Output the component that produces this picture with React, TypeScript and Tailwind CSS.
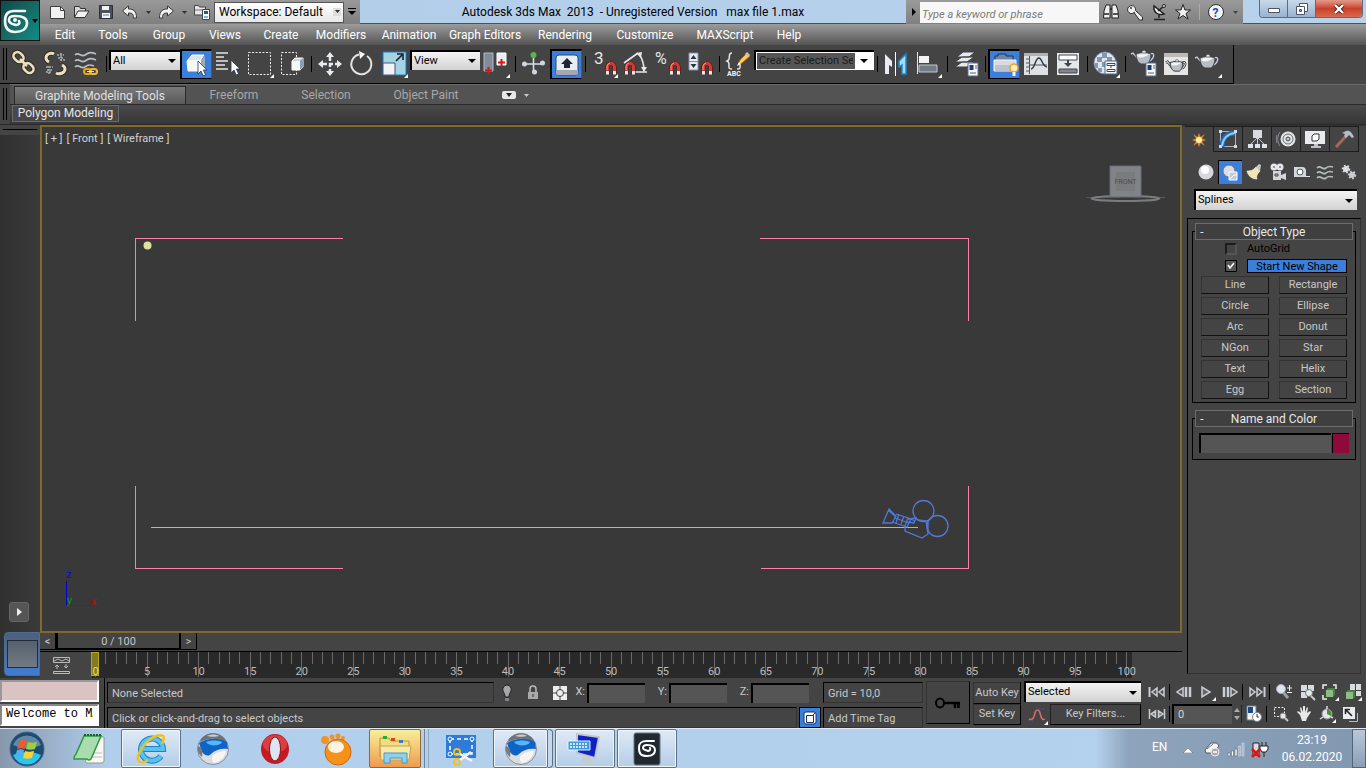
import type { ReactNode } from "react";

type IconProps = { children: ReactNode; w?: number; h?: number };

function Icon({ children, w = 28, h = 28 }: IconProps) {
  return (
    <svg width={w} height={h} viewBox={`0 0 ${w} ${h}`} fill="none" className="block shrink-0" aria-hidden="true">
      {children}
    </svg>
  );
}

const Flyout = () => <path d="M28 24v4h-4z" fill="#fff" />;

const Magnet = ({ x, y }: { x: number; y: number }) => (
  <g transform={`translate(${x} ${y})`}>
    <path d="M1.500 12V5a3.500 3.500 0 0 1 7 0v7" stroke="#5c1010" strokeWidth="4" />
    <path d="M1.500 9V5a3.500 3.500 0 0 1 7 0v4" stroke="#d23a34" strokeWidth="3" />
    <path d="M1 8V5a4 4 0 0 1 3-4" stroke="#f0948c" />
    <path d="M0 9h3v3.500H0zM7 9h3v3.500H7z" fill="#ececec" />
  </g>
);

const Cursor = ({ x, y }: { x: number; y: number }) => (
  <path transform={`translate(${x} ${y})`} d="M0 0v13l3-3 2.200 5 2.400-1-2.200-5H9z" fill="#fff" stroke="#27364a" strokeWidth=".8" />
);

const Teapot = ({ y = 0, outline = "#3b3f46" }: { y?: number; outline?: string }) => (
  <g transform={`translate(0 ${y})`}>
    <path d="M19 10c5-4 7 1 1 6M8 14 3 8 1 9" stroke={outline} strokeWidth="3" />
    <path d="M19 10c5-4 7 1 1 6M8 14 3 8 1 9" stroke="#c9ccd2" strokeWidth="1.400" />
    <path d="M6 9c4-2 11-2 15 0 0 5-2 9-4 10h-6c-3-1-5-5-5-10z" fill="#b9bec6" stroke={outline} />
    <path d="M7 10c2-1.500 8-2 12-1-3 3-8 4-11 3z" fill="#f2f3f5" />
    <path d="M12 7c0-2 4-2 4 0v1h-4z" fill="#eee" stroke={outline} strokeWidth=".6" />
  </g>
);

const MiniDialog = ({ x, y }: { x: number; y: number }) => (
  <g transform={`translate(${x} ${y})`}>
    <path d="M0 0h10v13H0z" fill="#f5f7fa" stroke="#5b6f8c" />
    <path d="M1.500 2h4v5h-4z" fill="#123f7a" />
    <path d="M7 3h2M7 5h2M2 10h6" stroke="#53647e" />
  </g>
);

const ChainLink = () => (
  <>
    <rect x="-5.500" y="-4" width="11" height="8" rx="4" transform="translate(9.500 7) rotate(45)" />
    <rect x="-5.500" y="-4" width="11" height="8" rx="4" transform="translate(19.500 18) rotate(45)" />
    <path d="m11 9 7 7" />
  </>
);

const icons = {
  link: (
    <Icon>
      <g stroke="#2c2a22" strokeWidth="4.500"><ChainLink /></g>
      <g stroke="#ecdfc0" strokeWidth="2.600"><ChainLink /></g>
    </Icon>
  ),
  unlink: (
    <Icon>
      <path d="M13 4c-3-2-8 0-8 4 0 2 1 3 3 4M15 23c3 2 9 0 9-4 0-2-1-3-3-4" stroke="#2c2a22" strokeWidth="5" />
      <path d="M13 4c-3-2-8 0-8 4 0 2 1 3 3 4M15 23c3 2 9 0 9-4 0-2-1-3-3-4" stroke="#ecdfc0" strokeWidth="3" />
      <path d="M16 5h7M17 8h6M19 10h5M20 3v8M5 17h7M6 20h6M5 22h6M8 16v8" stroke="#a9adb5" strokeWidth="1.500" strokeDasharray="2 1" />
    </Icon>
  ),
  bind: (
    <Icon>
      <path d="M2 5c4-4 6 3 10 0s6-3 11-1M2 11c4-4 6 3 10 0s6-3 11-1M2 17c4-4 6 3 10 0s6-2 9-1" stroke="#b9bdc5" strokeWidth="1.600" />
      <rect x="11" y="19" width="7" height="5" rx="2.500" stroke="#f0a800" strokeWidth="2" />
      <rect x="17" y="19" width="7" height="5" rx="2.500" stroke="#f5b92b" strokeWidth="2" />
      <path d="M14 21.500h7" stroke="#ffe08a" />
    </Icon>
  ),
  select: (
    <Icon>
      <path d="M4 10 9 4h12l-3 4v12H5z" fill="#dfe3ea" stroke="#fff" />
      <path d="M5 9h13v11H5z" fill="#f8f9fb" /><path d="m18 9 4-4v11l-4 4z" fill="#9ca9bd" />
      <Cursor x={15} y={10} />
    </Icon>
  ),
  byName: (
    <Icon>
      <path d="M2 3h12M2 7h8M2 11h12M2 15h9M2 19h12" stroke="#e5e5e5" strokeWidth="1.500" />
      <Cursor x={17} y={10} />
    </Icon>
  ),
  region: (
    <Icon><path d="M2.500 2.500h22v22h-22z" stroke="#eee" strokeDasharray="2 1.500" /><Flyout /></Icon>
  ),
  crossing: (
    <Icon>
      <path d="M3.500 2.500h15v22h-15z" stroke="#eee" strokeDasharray="2 1.500" />
      <path d="m14 11 3-3h8v9l-3 3h-8z" fill="#cfd5de" stroke="#fff" /><path d="M14 11h8v9h-8z" fill="#f6f7f9" /><path d="M22 11v9l3-3V8z" fill="#8c9bb0" />
    </Icon>
  ),
  move: (
    <Icon>
      <path d="m14 2 4 5h-8zM14 26l4-5h-8zM2 14l5-4v8zM26 14l-5-4v8z" fill="#e8ebef" />
      <path d="M14 7v14M7 14h14" stroke="#e8ebef" strokeWidth="2.500" strokeDasharray="4 2" />
    </Icon>
  ),
  rotate: (
    <Icon><path d="M19 6a10 10 0 1 1-8-1.500" stroke="#e3e3e3" strokeWidth="2" /><path d="m11 1 6 3-5 5z" fill="#fff" /></Icon>
  ),
  scale: (
    <Icon>
      <path d="M3 2h23v23H3z" fill="#a5d3e6" stroke="#1b79c4" /><path d="M3 13h12v12H3z" fill="#f1f3f6" stroke="#48566b" />
      <path d="m16 11 6-6M17 4h6v6" stroke="#16202c" strokeWidth="1.600" /><Flyout />
    </Icon>
  ),
  pivot: (
    <Icon>
      <path d="M2 3h9v18H2z" fill="#838b9b" stroke="#b3b9c4" /><path d="M15 3h9v12h-9z" fill="#eceef2" stroke="#fff" />
      <path d="M6.500 17v7M3 20.500h7M19.500 9v7M16 12.500h7" stroke="#d81414" strokeWidth="2" /><Flyout />
    </Icon>
  ),
  manipulate: (
    <Icon>
      <path d="M13.500 5v17M4 14h19" stroke="#dcdfe4" strokeWidth="1.500" />
      <circle cx="13.500" cy="5" r="3" fill="#58b648" /><circle cx="4.500" cy="14" r="2.500" fill="#cfd6e0" /><circle cx="22.500" cy="13" r="2.500" fill="#cfd6e0" /><circle cx="14.500" cy="22" r="2.500" fill="#cfd6e0" />
    </Icon>
  ),
  keyboard: (
    <Icon>
      <rect x="3" y="4" width="22" height="20" rx="3" fill="#e9ecf0" stroke="#2d4a78" /><path d="M3 19h22v3a2 2 0 0 1-2 2H5a2 2 0 0 1-2-2z" fill="#a2a9b4" />
      <path d="m14 7 6 6h-3v4h-6v-4H8z" fill="#1e2733" />
    </Icon>
  ),
  snap: (
    <Icon><text x="4" y="14" fontSize="17" fill="#e8e8e8">3</text><Magnet x={16} y={12} /><Flyout /></Icon>
  ),
  angle: (
    <Icon>
      <path d="M2 13 16 3M13 22h12M17 4c3 4 5 9 5 17" stroke="#e8e8e8" strokeWidth="1.600" /><path d="m14 3 6-1-1 6zM19 17h6l-3 5z" fill="#e8e8e8" />
      <Magnet x={3} y={12} />
    </Icon>
  ),
  percent: (
    <Icon><text x="1" y="14" fontSize="16" fill="#e8e8e8">%</text><Magnet x={16} y={12} /></Icon>
  ),
  spinnerSnap: (
    <Icon>
      <path d="M3 3h9v17H3z" fill="#e8ecf2" stroke="#8491a5" /><path d="M3 11.500h9" stroke="#8491a5" /><path d="m7.500 5 3 4h-6zM7.500 18l3-4h-6z" fill="#2b3644" />
      <Magnet x={16} y={12} />
    </Icon>
  ),
  named: (
    <Icon>
      <path d="M8 3C4 3 6 7 5 9c0 1-2 2-2 2s2 1 2 3c0 3-1 5 3 5M13 19c4 0 3-2 3-5" stroke="#e5e5e5" strokeWidth="1.500" />
      <path d="m14 15 2-5 7-7 3 3-8 7z" fill="#ffcf52" stroke="#b06a15" /><path d="m22 3 3 3" stroke="#e8b4a0" strokeWidth="3" /><path d="m13 16 2-4 2 2z" fill="#fff" />
      <text x="3" y="26" fontSize="7" fontWeight="700" fill="#f2f2f2">ABC</text>
    </Icon>
  ),
  mirror: (
    <Icon>
      <path d="M3 4l7 7v6l-3-2v9H3z" fill="#e8ebef" /><path d="M13.500 2v24" stroke="#fff" /><path d="m24 4-7 7v6l3-2v9h4z" fill="#a4dcf6" stroke="#1f86cc" strokeWidth="1.500" />
    </Icon>
  ),
  align: (
    <Icon><path d="M3.500 2v22" stroke="#e5e5e5" /><path d="M5 6h10v7H5z" fill="#f3f4f6" /><path d="M5 15h18v7H5z" fill="#737b88" stroke="#c2c7d0" /><Flyout /></Icon>
  ),
  layers: (
    <Icon>
      <path d="m3 17 7-5h12l-7 5zM3 12l7-5h12l-7 5zM5 7l6-5h12l-6 5z" fill="#e8eaed" stroke="#3e4148" />
      <MiniDialog x={16} y={13} />
    </Icon>
  ),
  ribbon: (
    <Icon>
      <path d="M4 5h3V3h8v2h7v5H4z" fill="#6f86a8" stroke="#23344f" /><path d="M3 9h22v11H3z" fill="#d7dbe2" stroke="#f6f7f9" /><path d="M4 14h20v6H4z" fill="#bcc1cb" />
      <circle cx="23" cy="17" r="4" fill="#fff0b0" stroke="#f0a020" strokeWidth="1.500" /><path d="M21.500 21h3v4h-3z" fill="#f3f3f3" />
    </Icon>
  ),
  curve: (
    <Icon>
      <path d="M2 3h24v22H2z" fill="#dfe2e5" /><path d="M2 3h24v3H2z" fill="#b3b0ae" /><path d="M7.500 6v18M4 9h3M4 13h3M4 17h3M4 21h3M8 15h17" stroke="#50555c" />
      <path d="M9 19c4 0 4-11 8-11 3 0 3 8 8 9" stroke="#30353b" strokeWidth="1.400" />
    </Icon>
  ),
  schematic: (
    <Icon>
      <path d="M3 3h22v22H3z" fill="#e6e7e9" /><path d="M5 5h18v5H5z" fill="#fff" stroke="#41464d" /><path d="M5 19h18v4H5z" fill="#83868b" stroke="#41464d" />
      <path d="M14 10v5" stroke="#41464d" strokeWidth="2" /><path d="M10 13h8l-4 4z" fill="#41464d" />
    </Icon>
  ),
  material: (
    <Icon>
      <circle cx="13" cy="13" r="11" fill="#dfe6ee" stroke="#7c8ca3" />
      <path d="M10 3h5v5h-5zM5 7h5v5H5zM15 7h5v5h-5zM10 12h5v5h-5zM3 13h3v5H3zM6 18h4v4H6z" fill="#8197b3" />
      <path d="M13 11h12v13H13z" fill="#f5f6f8" stroke="#4e678d" /><path d="M15 13.500h8v2h-8zM15 19.500h8v2h-8z" stroke="#334b72" /><path d="M19 15v3" stroke="#334b72" /><Flyout />
    </Icon>
  ),
  renderSetup: (
    <Icon><Teapot y={-5} /><MiniDialog x={16} y={13} /></Icon>
  ),
  frame: (
    <Icon><path d="M2 3h24v22H2z" fill="#e6e6e6" /><path d="M2 3h24v4H2z" fill="#bdb9b7" /><g transform="translate(3 5) scale(.85)"><Teapot outline="#26282c" /></g></Icon>
  ),
  render: (
    <Icon><Teapot y={-1} /><Flyout /></Icon>
  ),
};

type IconName = keyof typeof icons;

function Tool({ name, active }: { name: IconName; active?: boolean }) {
  return (
    <button
      aria-label={name}
      className={
        active
          ? "flex h-[30px] w-8 shrink-0 items-center justify-center border border-t-2 border-l-2 border-black border-r-[#555] bg-[#3b7fdc]"
          : "flex h-[30px] w-8 shrink-0 items-center justify-center"
      }
    >
      {icons[name]}
    </button>
  );
}

const Sep = () => <div className="ml-[3px] mr-[2px] h-4 w-px shrink-0 bg-black" />;

function Combo({ id, value, className }: { id: string; value: string; className: string }) {
  return (
    <div className={`relative shrink-0 border-t-2 border-l-2 border-black ${className}`}>
      <select
        id={id}
        aria-label={id}
        defaultValue={value}
        className="block h-full w-full appearance-none bg-linear-to-b from-[#f4f4f4] to-[#d2d2d2] pl-[2px] text-[11px] text-black"
      >
        <option>{value}</option>
      </select>
      <svg className="pointer-events-none absolute top-1/2 right-1 -translate-y-1/2" width="8" height="4" viewBox="0 0 8 4">
        <path d="M0 0h8L4 4z" fill="#000" />
      </svg>
    </div>
  );
}

const menus = [
  ["Edit", "w-10"],
  ["Tools", "w-14"],
  ["Group", "w-14"],
  ["Views", "w-14"],
  ["Create", "w-14"],
  ["Modifiers", "w-16"],
  ["Animation", "w-18"],
  ["Graph Editors", "w-20"],
  ["Rendering", "w-20"],
  ["Customize", "w-20"],
  ["MAXScript", "w-20"],
  ["Help", "w-12"],
];

function QuickAccess() {
  return (
    <div className="flex h-6 w-[320px] shrink-0 items-center bg-linear-to-b from-[#9a9a9a] to-[#7f7f7f] pl-[6px]">
      <button aria-label="New" className="flex w-6 justify-center">
        <Icon w={18} h={16}><path d="M1.500 2.500h10l4 4v8h-14z" fill="#f2f2f2" stroke="#3d3d3d" /><path d="M11.500 2.500v4h4" stroke="#3d3d3d" /></Icon>
      </button>
      <button aria-label="Open" className="flex w-6 justify-center">
        <Icon w={18} h={16}><path d="M1.500 13V2.500h5l1 2h5V7" fill="#d9d9d9" stroke="#333" /><path d="M1.500 13.500 5 7h11l-4 6.500z" fill="#f4f4f4" stroke="#333" /></Icon>
      </button>
      <button aria-label="Save" className="flex w-6 justify-center">
        <Icon w={16} h={16}><path d="M1.500 1.500h13v13h-13z" fill="#4a505c" stroke="#2b2f36" /><path d="M4 2h7v4H4zM4 9h8v5H4z" fill="#f4f4f4" /><path d="M5 11h6" stroke="#777" /></Icon>
      </button>
      <button aria-label="Undo" className="flex w-6 justify-center">
        <Icon w={18} h={16}><path d="m1.500 7 6-5v3c5 0 8 2 8 9h-3c0-4-1-5-5-5v3z" fill="#f2f2f2" stroke="#3a3a3a" /></Icon>
      </button>
      <span className="flex w-3 justify-center"><Icon w={5} h={3}><path d="M0 0h5L2.500 3z" fill="#333" /></Icon></span>
      <button aria-label="Redo" className="flex w-6 justify-center">
        <Icon w={18} h={16}><path d="m16.500 7-6-5v3c-5 0-8 2-8 9h3c0-4 1-5 5-5v3z" fill="#f2f2f2" stroke="#3a3a3a" /></Icon>
      </button>
      <span className="flex w-3 justify-center"><Icon w={5} h={3}><path d="M0 0h5L2.500 3z" fill="#333" /></Icon></span>
      <button aria-label="Project folder" className="flex w-6 justify-center">
        <Icon w={18} h={18}>
          <path d="M1.500 12V2.500h4l1 1.500h6v8z" fill="#e6e6e6" stroke="#444" /><path d="M2 7h11" stroke="#777" />
          <path d="M9.500 6.500h7v10h-7z" fill="#fff" stroke="#444" /><path d="M11 8h4v3h-4z" fill="#1d5aa5" /><path d="M11 14h4" stroke="#1d5aa5" />
        </Icon>
      </button>
      <div className="relative flex-1">
        <select aria-label="Workspace" className="block h-[21px] w-full appearance-none border border-[#555] bg-linear-to-b from-white to-[#e8e8e8] px-1 text-[12px] text-black">
          <option>Workspace: Default</option>
        </select>
        <span className="pointer-events-none absolute top-[6px] right-[3px] flex h-2 w-2 items-center justify-center bg-[#ddd]">
          <Icon w={5} h={3}><path d="M0 0h5L2.500 3z" fill="#333" /></Icon>
        </span>
      </div>
      <button aria-label="Customize toolbar" className="flex w-4 justify-center">
        <Icon w={8} h={8}><path d="M0 .5h8" stroke="#000" /><path d="M0 3h8L4 7z" fill="#000" /></Icon>
      </button>
    </div>
  );
}

function InfoCenter() {
  return (
    <div className="flex h-6 w-[337px] shrink-0 items-center bg-linear-to-b from-[#9a9a9a] to-[#808080] pl-px">
      <button aria-label="Collapse" className="flex w-[13px] justify-center"><Icon w={4} h={8}><path d="M0 0v8l4-4z" fill="#000" /></Icon></button>
      <input aria-label="Search" placeholder="Type a keyword or phrase" className="h-[21px] w-[179px] bg-[#f7f7f7] px-[2px] pt-1 text-[11px] italic placeholder:text-[#7a7a7a]" />
      <button aria-label="Find" className="flex w-6 justify-center">
        <Icon w={18} h={18}><path d="M2 8 4 2h4v13H1.500zM16 8l-2-6h-4v13h6.500z" fill="#f0f0f0" stroke="#222" /><path d="M2 11h5M11 11h5M8 6h2" stroke="#222" strokeWidth="1.500" /></Icon>
      </button>
      <button aria-label="Subscription" className="flex w-6 justify-center">
        <Icon w={18} h={18}><path d="M9 9 6.500 10.500a4 4 0 1 1 3-3l7 6.500v3h-3L8 9.500" fill="#f0f0f0" stroke="#2c2c2c" /><circle cx="5" cy="5" r="1" fill="#333" /></Icon>
      </button>
      <button aria-label="Exchange" className="flex w-6 justify-center">
        <Icon w={18} h={18}><path d="M4 3c-1 6 4 10 10 8zM9 12v3M4 16.500h11" fill="#f0f0f0" stroke="#222" strokeWidth="1.500" /><path d="m8 8 6-5" stroke="#222" strokeWidth="1.500" /><circle cx="14" cy="3" r="1.500" fill="#f0f0f0" stroke="#222" /></Icon>
      </button>
      <button aria-label="Favorites" className="flex w-6 justify-center">
        <Icon w={18} h={18}><path d="m9 1.500 2 5.500h5.500L12 10.500l2 5.500-5-3.500L4 16l2-5.500L1.500 7H7z" fill="#f0f0f0" stroke="#222" /></Icon>
      </button>
      <div className="mx-1 h-4 w-px bg-[#aaa]" />
      <button aria-label="Help" className="flex w-6 justify-center">
        <Icon w={18} h={18}><circle cx="9" cy="9" r="7.500" fill="#f6f6f6" stroke="#2c2c2c" /><text x="5.500" y="13.500" fontSize="12" fontWeight="700" fill="#1a4fae">?</text></Icon>
      </button>
      <span className="flex flex-1 justify-center"><Icon w={5} h={3}><path d="M0 0h5L2.500 3z" fill="#444" /></Icon></span>
    </div>
  );
}

function WindowButtons() {
  return (
    <div className="mr-[3px] ml-4 flex h-[18px] flex-1 self-start overflow-hidden rounded-b-[4px] border border-t-0 border-[#5b6b80] text-white">
      <button aria-label="Minimize" className="flex w-7 items-end justify-center border-r border-[#5b6b80] bg-linear-to-b from-[#c9d9ea] to-[#98b2cf] pb-1">
        <Icon w={12} h={5}><path d="M.5.500h11v4H.5z" fill="#fff" stroke="#4b5563" /></Icon>
      </button>
      <button aria-label="Restore" className="flex w-7 items-center justify-center border-r border-[#5b6b80] bg-linear-to-b from-[#c9d9ea] to-[#98b2cf]">
        <Icon w={12} h={12}><path d="M3.500.500h8v8h-8z" fill="#fff" stroke="#4b5563" /><path d="M.5 3.500h8v8h-8z" fill="#fff" stroke="#4b5563" /><path d="M3.500 6.500h2v2h-2z" fill="#8da7c4" stroke="#4b5563" /></Icon>
      </button>
      <button aria-label="Close" className="flex flex-1 items-center justify-center bg-linear-to-b from-[#e39a88] via-[#c9402a] to-[#d9694a]">
        <Icon w={12} h={10}><path d="m2 1 8 8M10 1 2 9" stroke="#4a2020" strokeWidth="4" /><path d="m2 1 8 8M10 1 2 9" stroke="#fff" strokeWidth="2.400" /></Icon>
      </button>
    </div>
  );
}

function Header() {
  return (
    <header className="flex h-[45px] bg-[#535353]">
      <button aria-label="Application menu" className="flex h-[41px] w-10 shrink-0 items-center border border-[#111] bg-linear-to-br from-[#0d4a48] via-[#176a64] to-[#0a8f86] pl-[2px]">
        <Icon w={28} h={30}>
          <path d="M22 5H11C5 5 2 8 2 15s3 11 10 11 12-3 12-9c0-5-5-7-12-7-4 0-6 1-6 4 0 4 4 4 7 5 3 0 4-2 3-4" stroke="#f2f7f6" strokeWidth="2.600" strokeLinecap="round" />
          <circle cx="12" cy="14" r="2" fill="#f2f7f6" />
        </Icon>
        <Icon w={8} h={4}><path d="M1 0h6L4 4z" fill="#000" /></Icon>
      </button>
      <div className="flex min-w-0 flex-1 flex-col">
        <div className="flex h-6 border-b border-[#4c5058] bg-linear-to-r from-[#b0cde9] to-[#b9d2ec]">
          <QuickAccess />
          <h1 className="min-w-0 flex-1 truncate text-center text-[12px] leading-6 whitespace-pre text-black">
            Autodesk 3ds Max  2013  - Unregistered Version   max file 1.max
          </h1>
          <InfoCenter />
          <div className="flex w-[123px] shrink-0"><WindowButtons /></div>
        </div>
        <nav className="flex flex-1 items-center bg-linear-to-b from-[#9c9c9c] to-[#555] pl-[5px] text-[12px] text-white">
          {menus.map(([name, width]) => (
            <button key={name} className={`${width} shrink-0 text-center`}>{name}</button>
          ))}
        </nav>
      </div>
    </header>
  );
}

function Toolbar() {
  return (
    <div className="flex h-[39px] bg-[#444]">
      <div className="flex items-center border-r border-b border-black pr-[9px]">
        <div className="ml-[3px] h-8 w-1 shrink-0 border-x border-black" />
        <Tool name="link" /><Tool name="unlink" /><Tool name="bind" /><Sep />
        <Combo id="Selection filter" value="All" className="mb-2 h-5 w-[71px]" />
        <Tool name="select" active /><Tool name="byName" /><Tool name="region" /><Tool name="crossing" /><Sep />
        <Tool name="move" /><Tool name="rotate" /><Tool name="scale" />
        <Combo id="Coordinate system" value="View" className="mb-2 h-5 w-[70px]" />
        <Tool name="pivot" /><Sep />
        <Tool name="manipulate" /><Tool name="keyboard" active /><Sep />
        <Tool name="snap" /><Tool name="angle" /><Tool name="percent" /><Tool name="spinnerSnap" /><Sep />
        <Tool name="named" />
        <div className="mb-2 flex h-5 w-[120px] shrink-0 border-t-2 border-l-2 border-black bg-white p-px">
          <input aria-label="Named selection sets" defaultValue="Create Selection Sets" className="w-[98px] bg-[#555] px-[2px] text-[11px] text-[#1c1c1c]" />
          <button aria-label="Open named sets" className="flex flex-1 items-center justify-center"><Icon w={8} h={4}><path d="M0 0h8L4 4z" fill="#000" /></Icon></button>
        </div>
        <Sep />
        <Tool name="mirror" /><Tool name="align" /><Sep />
        <Tool name="layers" /><Sep />
        <Tool name="ribbon" active /><Tool name="curve" /><Tool name="schematic" /><Sep />
        <Tool name="material" /><Sep />
        <Tool name="renderSetup" /><Tool name="frame" /><Tool name="render" />
      </div>
    </div>
  );
}

function Ribbon() {
  return (
    <div className="flex h-10 bg-[#444]">
      <div className="mx-[3px] my-1 w-1 shrink-0 border-x border-black" />
      <div className="flex flex-1 flex-col">
        <div className="flex h-[21px] items-end border-t border-b border-t-[#6a6a6a] border-b-[#2a2a2a] bg-[#535353] pl-1 text-[12px] leading-[18px] text-[#a8a8a8]">
          <button className="h-[18px] w-[172px] border border-b-0 border-[#2a2a2a] bg-linear-to-b from-[#7a7a7a] to-[#5a5a5a] text-[#e0e0e0]">Graphite Modeling Tools</button>
          <button className="h-[18px] w-24">Freeform</button>
          <button className="h-[18px] w-22">Selection</button>
          <button className="h-[18px] w-28">Object Paint</button>
          <button aria-label="Ribbon options" className="ml-5 flex h-[18px] items-center gap-2">
            <Icon w={14} h={8}><rect width="14" height="8" rx="2" fill="#e8e8e8" /><path d="M4 2h6L7 6z" fill="#222" /></Icon>
            <Icon w={5} h={3}><path d="M0 0h5L2.500 3z" fill="#ccc" /></Icon>
          </button>
        </div>
        <div className="flex flex-1 bg-linear-to-b from-[#4a4a4a] to-[#363636] pb-[2px] pl-[2px]">
          <button className="w-[107px] border border-[#6a6a6a] bg-[#484848] text-[12px] leading-[15px] text-[#e6e6e6]">Polygon Modeling</button>
        </div>
      </div>
    </div>
  );
}

function SideStrip() {
  return (
    <aside className="flex w-10 shrink-0 flex-col bg-linear-to-r from-[#303030] to-[#3a3a3a]">
      <div className="h-[10px] bg-[#444] px-[3px] pt-1"><div className="h-px bg-black" /></div>
      <div className="flex-1" />
      <button aria-label="Expand" className="mb-[10px] ml-[9px] flex h-5 w-5 items-center justify-center rounded-[3px] border border-[#666] bg-[#555]">
        <Icon w={5} h={8}><path d="M0 0v8l5-4z" fill="#eee" /></Icon>
      </button>
      <div className="ml-1 flex h-11 items-center rounded-l-[4px] border border-[#4f6c92] bg-linear-to-b from-[#4d5f78] to-[#3f7dd6] pl-[2px]">
        <button aria-label="Viewport layout" className="h-7 w-[31px] border border-[#222b38] bg-linear-to-b from-[#56606e] to-[#737a84]" />
      </div>
      <div className="h-[2px]" />
    </aside>
  );
}

function Viewport() {
  return (
    <section className="relative flex-1 border-2 border-[#7f6a2a] bg-[#393939]">
      <svg className="absolute inset-0 h-full w-full" viewBox="42 127 1138 504" fill="none" shapeRendering="crispEdges">
        <path d="M135.500 321V238.500H343M760 238.500h208.500V321M135.500 486v82.500H343M761 568.500h207.500V486" stroke="#ff7fa8" />
        <path d="M151 527.500h767" stroke="#d8a69c" />
        <circle cx="147.500" cy="245.500" r="4" fill="#e0e29a" shapeRendering="auto" />
        <g stroke="#5078d6" shapeRendering="auto" strokeWidth="1.300">
          <circle cx="923.500" cy="511" r="10.500" /><circle cx="937.500" cy="526" r="10.500" />
          <path d="M883 523h9l4-7-7-7zM892 522l15 5 4-8-15-5M888 510l8 7M895 518l14 5M899 514l-3 9M904 516l-3 8M908 518l-3 8M908 519l8-1-2 5-7-1M911 519l4 2M905 526v5l17 7 6-4-2-13-7-1M928 521v13" />
        </g>
        <path d="M66.500 581v25" stroke="#0000d8" /><path d="M67 605.500h25" stroke="#a00808" />
        <g fontSize="11" shapeRendering="auto">
          <text x="66" y="578" fill="#0a0adc">z</text><text x="67" y="604" fill="#0a9a0a">y</text><text x="91" y="605" fill="#c00808">x</text>
        </g>
        <g shapeRendering="auto">
          <path d="M1086 197.500h8M1157 197.500h8" stroke="#55585b" />
          <ellipse cx="1125.500" cy="198.500" rx="34" ry="2.500" stroke="#7a7d80" strokeWidth="2" />
          <path d="M1110 166h31v31h-31z" fill="#828386" stroke="#686d7c" />
          <path d="M1116 172h19v19h-19z" fill="#7a7b7e" />
          <text x="1125.500" y="184" textAnchor="middle" fontSize="7" fill="#4c4e52">FRONT</text>
        </g>
      </svg>
      <div className="absolute top-1 left-[3px] flex gap-1 text-[11px] leading-4 text-[#d2d2d2]">
        <button>[ + ]</button><button>[ Front ]</button><button>[ Wireframe ]</button>
      </div>
    </section>
  );
}

const frames = Array.from({ length: 101 }, (_, i) => i);

function Timeline() {
  return (
    <>
      <div className="flex h-[18px] items-stretch bg-[#444] pb-px text-[11px] leading-[18px] text-[#c4c4c4]">
        <button aria-label="Previous frame" className="w-4 border-r border-b border-black">&lt;</button>
        <button className="w-[125px] border-2 border-t-0 border-black bg-[#444] text-center">0 / 100</button>
        <button aria-label="Next frame" className="w-4 border-r border-b border-black">&gt;</button>
      </div>
      <div className="flex h-[27px] border-t border-black bg-[#444]">
        <button aria-label="Mini curve editor" className="flex w-[52px] items-center pl-[13px]">
          <Icon w={17} h={17}><path d="M.5.500h16v5H.5zM.5 14.500h16v2H.5z" stroke="#bbb" /><path d="m1 4 4-2 4 2 4-2 3 2M4 12V8m-2 2 2-2 2 2M13 7v4m-2-2 2 2 2-2" stroke="#bbb" /></Icon>
        </button>
        <div className="flex flex-1 justify-between bg-[#292929] pr-[4px] pl-[3px]">
          {frames.map((f) => (
            <div key={f} className={f % 5 ? "h-[12px] w-px bg-[#6a6a6a]" : "relative h-[25px] w-px bg-[#6a6a6a]"}>
              {f === 0 && <div className="absolute top-0 -left-[4px] h-6 w-2 border border-[#b5a52a] bg-[#857a1c]" />}
              {f % 5 === 0 && (
                <span className={f ? "absolute top-[12px] left-1/2 -translate-x-1/2 text-[11px] leading-4 text-[#bdbdbd]" : "absolute top-[12px] left-1/2 -translate-x-1/2 text-[11px] leading-4 text-[#e5dc5a]"}>{f}</span>
              )}
            </div>
          ))}
        </div>
        <div className="w-[50px]" />
      </div>
    </>
  );
}

const shapes = ["Line", "Rectangle", "Circle", "Ellipse", "Arc", "Donut", "NGon", "Star", "Text", "Helix", "Egg", "Section"];

const panelTabs: [string, ReactNode][] = [
  ["Create", <Icon w={18} h={18}><path d="m9 2 1.500 4L15 3l-3 4.500L16 9l-4 1.500 3 4.500-4.500-3L9 16l-1.500-4L3 15l3-4.500L2 9l4-1.500L3 3l4.500 3z" fill="#e8842e" /><circle cx="9" cy="9" r="3" fill="#fff3a0" /></Icon>],
  ["Modify", <Icon w={20} h={20}><path d="M2.500 2.500h15v15h-15z" stroke="#aab6c4" /><path d="M4 18C4 9 9 4 17 4" stroke="#1c6cc0" strokeWidth="5" /><path d="M4 17C5 9 10 5 17 4" stroke="#8dcbf4" strokeWidth="2" /><path d="M1 1h3v3H1zM16 1h3v3h-3zM1 16h3v3H1zM16 16h3v3h-3z" fill="#d5dae2" /></Icon>],
  ["Hierarchy", <Icon w={20} h={20}><path d="M6 1h9v8H6z" fill="#d8dbe0" /><path d="M10.500 9v6M10 9l-6 6M11 9l6 6" stroke="#c5c9cf" /><path d="M1 15h5v4H1zM8 15h5v4H8zM15 15h5v4h-5z" fill="#dfe2e6" /></Icon>],
  ["Motion", <Icon w={20} h={20}><circle cx="12" cy="10" r="7.500" fill="#e4e6e9" /><circle cx="12" cy="10" r="5" stroke="#666b73" /><circle cx="12" cy="10" r="2" stroke="#444" fill="#ccc" /><path d="M4 3c-3 4-3 10 0 14M1 6c-1 3-1 5 0 8" stroke="#888d94" /></Icon>],
  ["Display", <Icon w={20} h={20}><path d="M0 2h20v13H0z" fill="#e9ebee" /><path d="m7 7 2-2h5v5l-2 2H7z" stroke="#333" fill="#fff" /><path d="M9 15h4v2h3v2H6v-2h3z" fill="#bfc3c9" /></Icon>],
  ["Utilities", <Icon w={20} h={20}><path d="m2 18 11-12" stroke="#a8655c" strokeWidth="3" /><path d="m8 4 4-2c4-1 6 2 8 6l-2 1-3-3-3 3-2-2 1-2z" fill="#b7bcc4" /></Icon>],
];

const categories: [string, ReactNode][] = [
  ["Geometry", <Icon w={18} h={18}><circle cx="9" cy="9" r="7.500" fill="#d6d8dc" /><circle cx="8" cy="7" r="4" fill="#fff" /></Icon>],
  ["Shapes", <Icon w={18} h={18}><circle cx="8" cy="7" r="6" fill="#d7dce5" stroke="#6c7888" /><path d="M8 8h8v8H8z" stroke="#fff" fill="#bfc9d8" /><path d="m9 15 4-4h3" stroke="#fff" /></Icon>],
  ["Lights", <Icon w={18} h={18}><path d="M2 8c5 0 6-1 9-4l4 4c-3 3-4 6-3 8-5 0-9-3-10-8z" fill="#f0e6b4" stroke="#fff" strokeWidth=".6" /><path d="m11 4 3-3 2 1-1 6z" fill="#c4c8cf" /></Icon>],
  ["Cameras", <Icon w={18} h={18}><circle cx="5" cy="4" r="3.500" fill="#e6e8ea" /><circle cx="11" cy="4" r="3.500" fill="#e6e8ea" /><path d="M4 8h8v9H4zM12 12l5-2v7l-5-2z" fill="#d3d6db" /><path d="M4 4h2M10 4h2M6 11h3v2H6z" stroke="#444" /></Icon>],
  ["Helpers", <Icon w={18} h={18}><path d="M2 4h9a4 4 0 0 1 3 4v6H2z" fill="#d4d8de" /><circle cx="8" cy="9" r="3" fill="#fff" stroke="#4a5260" /><path d="M14 13.500h4" stroke="#e6e6e6" /></Icon>],
  ["Space warps", <Icon w={18} h={18}><path d="M1 5c4-4 5 3 9 0 2-2 4-2 7-1M1 10c4-4 5 3 9 0 2-2 4-2 7-1M1 15c4-4 5 3 9 0 2-2 4-2 7-1" stroke="#b3bcba" strokeWidth="1.600" /></Icon>],
  ["Systems", <Icon w={18} h={18}><circle cx="6" cy="6" r="3" fill="#dcdee2" stroke="#dcdee2" strokeWidth="2.500" strokeDasharray="1.500 1.500" /><circle cx="12" cy="12" r="3" fill="#c9ccd1" stroke="#c9ccd1" strokeWidth="2.500" strokeDasharray="1.500 1.500" /></Icon>],
];

function Rollout({ title, children }: { title: string; children: ReactNode }) {
  return (
    <div className="mt-3 mb-[15px] border border-black px-[2px]">
      <h2 className="-mt-[9px] flex h-[17px] items-center border border-[#6c6c6c] bg-[#3f3f3f] pr-3 text-[12px] text-[#e8e8e8]">
        <span className="w-3 text-center leading-3">-</span>
        <span className="flex-1 text-center">{title}</span>
      </h2>
      {children}
    </div>
  );
}

function CommandPanel() {
  return (
    <aside className="flex w-[184px] shrink-0 flex-col border-t border-[#333] bg-[#444] pr-[5px] pl-[5px]">
      <div className="-ml-[2px] flex h-[26px]">
        {panelTabs.map(([name, icon], i) => (
          <button key={name} aria-label={name} className={i ? "flex w-[29px] items-center justify-center border-t border-r border-b border-[#1c1c1c]" : "flex w-[29px] items-center justify-center border-t border-r border-[#1c1c1c]"}>{icon}</button>
        ))}
      </div>
      <div className="mt-2 flex h-6 pl-[7px]">
        {categories.map(([name, icon]) => (
          <button key={name} aria-label={name} className={name === "Shapes" ? "flex w-6 items-center justify-center border-t border-l border-black bg-[#3b7fdc]" : "flex w-6 items-center justify-center"}>{icon}</button>
        ))}
      </div>
      <Combo id="Category" value="Splines" className="mt-[5px] mr-1 ml-[7px] h-[21px]" />
      <div className="mt-2 mb-1 flex-1 border border-black border-r-[#333] border-b-[#333] px-1">
        <Rollout title="Object Type">
          <div className="px-[6px] pb-[3px] text-[11px]">
            <div className="ml-6 grid grid-cols-[13px_1fr] items-center gap-x-[9px] gap-y-[3px] pt-[2px]">
              <input id="autogrid" type="checkbox" disabled className="h-3 w-3 appearance-none border-2 border-[#1c1c1c] border-r-[#555] border-b-[#555]" />
              <label htmlFor="autogrid" className="leading-[14px] text-black">AutoGrid</label>
              <span className="relative">
                <input id="newshape" type="checkbox" defaultChecked className="block h-3 w-3 appearance-none border border-black bg-[#555]" />
                <svg className="pointer-events-none absolute top-[2px] left-[2px]" width="8" height="8" viewBox="0 0 8 8" fill="none"><path d="m1 3 2 3 4-5" stroke="#fff" strokeWidth="1.600" /></svg>
              </span>
              <label htmlFor="newshape" className="h-[14px] border border-black bg-[#3b7fdc] text-center leading-[14px] text-black">Start New Shape</label>
            </div>
            <div className="mt-[3px] grid grid-cols-2 gap-x-[10px] gap-y-[3px]">
              {shapes.map((s) => (
                <button key={s} className="h-[18px] border border-[#333] border-r-[#111] border-b-[#111] text-[11px] leading-4 text-[#c8c8c8]">{s}</button>
              ))}
            </div>
          </div>
        </Rollout>
        <Rollout title="Name and Color">
          <div className="flex items-center justify-between px-1 py-[6px]">
            <input aria-label="Object name" className="h-5 w-[132px] border-t-2 border-l-2 border-black bg-[#555]" />
            <button aria-label="Object color" className="h-5 w-[17px] border-t border-l border-black bg-[#8f0a3b]" />
          </div>
        </Rollout>
      </div>
    </aside>
  );
}

function Coord({ axis, className }: { axis: string; className: string }) {
  return (
    <label className={`flex items-center gap-[2px] ${className}`}>
      {axis}:
      <input className="h-5 w-[58px] border-t-2 border-l-2 border-black bg-[#555]" />
    </label>
  );
}

const play = "#c9cdd2";
const transport: Record<string, ReactNode> = {
  start: <Icon w={18} h={14}><path d="M1.500 2v10" stroke={play} strokeWidth="2" /><path d="M9 3v8L4 7zM16 3v8l-5-4z" fill="#555" stroke={play} strokeWidth="1.500" /></Icon>,
  prev: <Icon w={18} h={14}><path d="M8 3v8L2 7z" fill="#555" stroke={play} strokeWidth="1.500" /><path d="M11 2v10M15 2v10" stroke={play} strokeWidth="2.500" /></Icon>,
  play: <Icon w={18} h={18}><path d="M4 4v10l8-5z" fill="#666" stroke={play} strokeWidth="1.500" /><path d="M18 14v4h-4z" fill="#fff" /></Icon>,
  next: <Icon w={18} h={14}><path d="M10 3v8l6-4z" fill="#555" stroke={play} strokeWidth="1.500" /><path d="M3 2v10M7 2v10" stroke={play} strokeWidth="2.500" /></Icon>,
  end: <Icon w={18} h={14}><path d="M16.500 2v10" stroke={play} strokeWidth="2" /><path d="M2 3v8l5-4zM9 3v8l5-4z" fill="#555" stroke={play} strokeWidth="1.500" /></Icon>,
  key: <Icon w={18} h={14}><path d="M1.500 2v10M16.500 2v10" stroke={play} strokeWidth="1.500" /><path d="M7.500 4v6L3 7zM10.500 4v6L15 7z" fill="#777" stroke={play} strokeWidth="1.500" /></Icon>,
  config: <Icon w={18} h={18}><path d="M2 1h9v14H2z" fill="#f3f5f7" stroke="#6c7c92" /><path d="M3 2h5v6H3z" fill="#174b8b" /><circle cx="12" cy="12" r="4.500" fill="#fff" stroke="#77808c" /><path d="M12 9v3h2" stroke="#333" /></Icon>,
  zoom: <Icon w={18} h={18}><path d="m8 9 5 6" stroke="#999fa8" strokeWidth="3" /><circle cx="6" cy="6" r="4.500" fill="#dfe5ec" stroke="#aab" /><path d="M12 5h5M14.500 2v6M12 9.500h5" stroke="#eee" /></Icon>,
  zoomAll: <Icon w={18} h={18}><path d="M3 2h6v6H3zM10 2h6v6h-6zM3 9h6v6H3z" fill="#d8dbe0" /><circle cx="11" cy="10" r="3.500" fill="#e4ece8" stroke="#777" /><path d="m13 13 4 4" stroke="#ccc" strokeWidth="2" /></Icon>,
  extents: <Icon w={18} h={18}><path d="M2 6V2h4M12 2h3v4M2 12v4h4" stroke="#eee" strokeWidth="1.500" /><path d="m5 7 2-2h7v7l-2 2H5z" fill="#4f7d47" /><path d="M5 7h7v7H5z" fill="#8dbb83" /><path d="M18 14v4h-4z" fill="#fff" /></Icon>,
  extentsAll: <Icon w={18} h={18}><path d="M6 1h5v6H6zM12 1h5v6h-5zM12 8h5v5h-5z" fill="#d8dbe0" /><path d="m2 9 2-2h7v7l-2 2H2z" fill="#4f7d47" /><path d="M2 9h7v7H2z" fill="#8dbb83" /><path d="M18 14v4h-4z" fill="#fff" /></Icon>,
  region: <Icon w={18} h={18}><path d="M2.500 2.500h10v9h-10z" stroke="#eee" strokeDasharray="2 1.500" /><circle cx="11" cy="11" r="3" fill="#e3e8ee" stroke="#888" /><path d="m13 13 3 3" stroke="#ccc" strokeWidth="2" /></Icon>,
  pan: <Icon w={18} h={18}><path d="M5 10 2 7l1-1 3 2L5 3l1-1 2 5V1h2v6l2-5 1 1-1 5 3-2 1 1-4 6-1 3H7z" fill="#e8e8e8" /></Icon>,
  orbit: <Icon w={18} h={18}><circle cx="9" cy="9" r="5" fill="#e1e4e8" stroke="#999" /><path d="M9 9V4a5 5 0 0 1 4 7z" fill="#4e8a3c" /><path d="M9 1v3M2 14l3-2M15 13l-2-1" stroke="#ddd" strokeWidth="1.500" /><path d="M18 14v4h-4z" fill="#fff" /></Icon>,
  maximize: <Icon w={18} h={18}><path d="M2 2h12v12H2z" fill="#e9ebee" /><path d="M8 16.500h8.500V8" stroke="#bbb" /><path d="m5 5 6 6M4.500 9V4.500H9" stroke="#222" strokeWidth="1.600" /></Icon>,
};

function NavCell({ name }: { name: string }) {
  return <button aria-label={name} className="flex h-5 w-[23px] shrink-0 items-center justify-center">{transport[name]}</button>;
}

const NavSep = () => <div className="ml-px mr-[2px] h-4 w-px shrink-0 bg-black" />;

function StatusBar() {
  return (
    <div className="flex h-[50px] bg-[#444] text-[11px] text-[#c8c8c8]">
      <div className="mr-[5px] flex w-[99px] shrink-0 flex-col gap-[2px] py-[2px]">
        <div className="flex-1 border-2 border-[#999] border-r-white border-b-white bg-[#dcc3c3]" />
        <input aria-label="MAXScript listener" defaultValue="Welcome to MAX" className="h-[22px] border-2 border-[#888] border-r-white border-b-white bg-white px-1 pb-[3px] font-['Liberation_Mono',monospace] text-[12px] text-black" />
      </div>
      <div className="flex min-w-0 flex-1 flex-col justify-between border-l border-black pl-[2px]">
        <div className="mt-1 flex h-[21px] items-center">
          <div className="h-full min-w-0 flex-1 border border-black border-r-[#333] border-b-[#333] pl-1 leading-[21px]">None Selected</div>
          <button aria-label="Adaptive degradation" className="flex w-[26px] justify-center"><Icon w={12} h={18}><path d="M6 1a4.500 4.500 0 0 1 4 6c-1 2-2 3-2 6H4c0-3-1-4-2-6a4.500 4.500 0 0 1 4-6z" fill="#a4a6a9" stroke="#222" /><path d="M5 14v3M7 14v3" stroke="#bbb" /></Icon></button>
          <button aria-label="Lock selection" className="flex w-[26px] justify-center"><Icon w={12} h={16}><path d="M3 7V4a3 3 0 0 1 6 0v3" stroke="#bbb" strokeWidth="1.500" /><path d="M1 7h10v7H1z" fill="#aaa" /><path d="M6 9v3" stroke="#333" /></Icon></button>
          <button aria-label="Absolute mode" className="flex w-[28px] justify-center"><Icon w={14} h={14}><path d="M0 0h14v14H0z" fill="#eee" /><circle cx="7" cy="7" r="3.500" stroke="#444" /><path d="M7 0v4M7 10v4M0 7h4M10 7h4" stroke="#444" /></Icon></button>
          <Coord axis="X" className="w-[71px] justify-end" />
          <Coord axis="Y" className="w-[82px] justify-end" />
          <Coord axis="Z" className="w-[82px] justify-end" />
          <div className="ml-[14px] h-full w-[100px] border border-black border-r-[#333] border-b-[#333] pl-1 leading-[21px]">Grid = 10,0</div>
        </div>
        <div className="flex h-[21px] items-center">
          <div className="h-full min-w-0 flex-1 border border-black border-r-[#333] border-b-[#333] pl-1 leading-[21px]">Click or click-and-drag to select objects</div>
          <button aria-label="Isolate selection" className="mr-[2px] ml-[2px] flex h-[21px] w-[22px] items-center justify-center border border-black bg-[#3b7fdc]">
            <Icon w={14} h={14}><rect x="1" y="1" width="12" height="12" rx="2" fill="#fff" stroke="#17335f" /><path d="M3.500 4.500h7v7h-7z" stroke="#17335f" /><path d="m10 4 2-2" stroke="#17335f" /></Icon>
          </button>
          <button className="h-full w-[100px] border border-black border-r-[#333] border-b-[#333] pl-1 text-left leading-[21px]">Add Time Tag</button>
        </div>
      </div>
      <button aria-label="Set keys" className="mx-[3px] mt-[3px] mb-1 flex w-11 shrink-0 items-center justify-center border border-[#333] border-r-black border-b-black">
        <Icon w={26} h={12}><ellipse cx="5" cy="6" rx="4" ry="4.500" stroke="#000" strokeWidth="2" /><path d="M9 6h16M20 6v5M23.500 6v5" stroke="#000" strokeWidth="2.500" /></Icon>
      </button>
      <div className="mt-1 mb-[3px] flex w-12 shrink-0 flex-col">
        <button className="flex-1 border border-[#333] border-r-black border-b-black">Auto Key</button>
        <button className="flex-1 border border-[#333] border-r-black border-b-black">Set Key</button>
      </div>
      <div className="mt-[3px] ml-[3px] flex w-[117px] shrink-0 flex-col gap-[2px]">
        <Combo id="Key selection" value="Selected" className="h-[21px]" />
        <div className="flex h-[21px] items-center">
          <button aria-label="Tangents" className="w-[26px]"><Icon w={26} h={20}><path d="M5 14c4 2 5-2 6-6s4-4 5 0 2 8 5 6" stroke="#d86a6a" strokeWidth="1.500" /><path d="M4 16h5M12 4h8" stroke="#4a4aa8" strokeDasharray="2 1" /><path d="M24 16v4h-4z" fill="#fff" /></Icon></button>
          <button className="h-full flex-1 border border-[#222] border-r-black border-b-black">Key Filters...</button>
        </div>
      </div>
      <div className="mt-1 ml-1 flex w-[221px] shrink-0 flex-col gap-[2px]">
        <div className="flex items-center">
          <NavCell name="start" /><NavSep /><NavCell name="prev" /><NavCell name="play" /><NavCell name="next" /><NavSep /><NavCell name="end" /><NavSep />
          <NavCell name="zoom" /><NavCell name="zoomAll" /><NavCell name="extents" /><NavCell name="extentsAll" />
        </div>
        <div className="flex items-center">
          <NavCell name="key" /><NavSep />
          <input aria-label="Current frame" defaultValue="0" className="h-5 w-[60px] border-t-2 border-l-2 border-black bg-[#555] pb-px pl-1 text-[11px] text-[#d8d8d8]" />
          <div className="flex h-[18px] w-[10px] flex-col items-center justify-between border-r border-[#222] py-[3px]">
            <Icon w={6} h={4}><path d="M3 0 6 4H0z" fill="#aaa" /></Icon><Icon w={6} h={4}><path d="M3 4 6 0H0z" fill="#aaa" /></Icon>
          </div>
          <NavCell name="config" /><NavSep />
          <NavCell name="region" /><NavCell name="pan" /><NavCell name="orbit" /><NavCell name="maximize" />
        </div>
      </div>
    </div>
  );
}

const running = "flex h-[39px] shrink-0 items-center justify-center rounded-[2px] border border-[#5d7084] bg-linear-to-b from-[#dfeaf6] to-[#b4cde8] shadow-[inset_0_0_0_1px_#eef5fc]";
const idle = "flex h-[39px] w-[60px] shrink-0 items-center justify-center";

const Browser = () => (
  <Icon w={34} h={34}>
    <circle cx="17" cy="17" r="15.500" fill="#dcdddf" stroke="#8a8f96" />
    <path d="M5 7a15.500 15.500 0 0 1 24 0l2 4C22 5 11 6 4 10z" fill="#6f7378" />
    <path d="M11 4c4-2 9-2 12 0-3 1-9 1-12 0z" fill="#c9ccd0" />
    <path d="M3 11C11 6 22 5 31 10l1 7c-7-1-13 1-17 5-3 3-7 1-9-2z" fill="#0f63c4" />
    <path d="M10 10c5-2 11-2 16 0-1 4-13 5-16 0z" fill="#56b6ff" />
    <path d="M2 14c4 1 5 6 4 11-4-3-5-7-4-11z" fill="#777b80" />
    <path d="M17 23c4-3 9-4 13-4-1 6-6 11-12 12-2-2-3-5-1-8z" fill="#f5f5f6" />
  </Icon>
);

function Taskbar() {
  return (
    <footer className="flex h-10 items-center border-t border-[#dfeaf5] bg-linear-to-r from-[#8798ae] via-[#b1cfec] via-8% to-[#b4d1ed]">
      <button aria-label="Start" className="flex w-[54px] shrink-0 justify-center">
        <Icon w={36} h={36}>
          <circle cx="18" cy="18" r="17" fill="#1d4c73" stroke="#48627c" /><path d="M4 24a15 15 0 0 0 28 0c-8-4-20-4-28 0z" fill="#2bc6ee" /><path d="M4 14a15 15 0 0 1 28 0c-8 4-20 4-28 0z" fill="#7ea3bf" opacity=".7" />
          <path d="M11 10c3-2 5-1 7 0l-2 8c-2-1-5-1-8 0z" fill="#f0592a" /><path d="M19 11c3 1 5 1 9 0l-2 7c-3 1-6 1-9 0z" fill="#9dcf3c" /><path d="M8 19c3-1 5-1 7 0l-2 8c-2-1-4-1-7 0z" fill="#4cb1ee" /><path d="M16 20c3 1 5 1 9 0l-2 7c-3 1-6 1-9 0z" fill="#fbd234" />
        </Icon>
      </button>
      <div className="ml-[5px] flex gap-[2px]">
        <button aria-label="Notes" className={idle}>
          <Icon w={34} h={32}><path d="M12 4h20v24q0 2-3 2H14z" fill="#f8f8f5" stroke="#9a9a8c" /><path d="M16 20h14M16 24h14" stroke="#bbb" /><path d="M12 3h17L19 26q-2 2-4 0H2q0-3 2-5z" fill="#a9dcb1" stroke="#2b9a3b" strokeWidth="1.500" /><path d="M12 2h18" stroke="#1d5d2b" strokeWidth="2" strokeDasharray="2 1" /></Icon>
        </button>
        <button aria-label="Internet Explorer" className={`${running} w-[60px]`}>
          <Icon w={34} h={34}><path d="M27 24a11 11 0 1 1 2-7H9" stroke="#1a84c8" strokeWidth="6" /><path d="M27 24a11 11 0 1 1 2-7H9" stroke="#57c2f0" strokeWidth="4" /><path d="M6 30C-3 26 18-2 29 4c2 2 0 6-1 8M6 30c2 1 5 0 8-2" stroke="#f3c11e" strokeWidth="2.500" /></Icon>
        </button>
        <button aria-label="Browser" className={idle}><Browser /></button>
        <button aria-label="Opera" className={idle}>
          <Icon w={30} h={32}><ellipse cx="15" cy="16" rx="14" ry="15" fill="#c51b20" /><ellipse cx="15" cy="11" rx="12" ry="9" fill="#e2595a" opacity=".6" /><ellipse cx="15" cy="16" rx="5.500" ry="12" fill="#dbe6f0" stroke="#8e1115" /></Icon>
        </button>
        <button aria-label="Gom Player" className={idle}>
          <Icon w={34} h={34}><circle cx="5" cy="8" r="4" fill="#f39321" /><circle cx="12" cy="5" r="2.500" fill="#f39321" /><circle cx="18" cy="4" r="2.500" fill="#f39321" /><circle cx="23" cy="6" r="2" fill="#f39321" /><circle cx="18" cy="20" r="13" fill="#f6911a" stroke="#d2660a" /><ellipse cx="16" cy="15" rx="8" ry="6" fill="#fff4df" /></Icon>
        </button>
        <div className="flex">
          <button aria-label="Explorer" className="flex h-[39px] w-[52px] items-center justify-center rounded-[2px] border border-[#8b6b3a] bg-linear-to-b from-[#f6f09a] to-[#ef9a4e]">
            <Icon w={34} h={34}><path d="M2 6h9l2 3h18v16H2z" fill="#f3dc7e" stroke="#b8963a" /><path d="M5 4h4v3H5z" fill="#1fae3a" /><path d="M13 6h4v3h-4z" fill="#d9452b" /><path d="M21 8h4v3h-4z" fill="#2d80d8" /><path d="M2 14h31l-2 14H3z" fill="#f8e9a5" stroke="#c4a550" /><path d="M6 31V21h23v10h-5v-5H12v5z" fill="#8fd0ee" stroke="#4498c8" /></Icon>
          </button>
          <div className="h-[39px] w-1 border-r border-[#6f8296]" /><div className="h-[39px] w-1 border-r border-[#8fa5bb]" />
        </div>
        <button aria-label="Snipping" className={idle}>
          <Icon w={34} h={34}><path d="M2 3h30v23H2z" fill="#2f7bd9" /><path d="M6 7h22v15H6z" stroke="#fff" strokeWidth="1.500" strokeDasharray="4 3" /><circle cx="6" cy="7" r="2" fill="#2f7bd9" stroke="#fff" /><circle cx="28" cy="7" r="2" fill="#2f7bd9" stroke="#fff" /><circle cx="6" cy="22" r="2" fill="#2f7bd9" stroke="#fff" /><circle cx="13" cy="20" r="3" stroke="#f4c21c" strokeWidth="2" /><circle cx="13" cy="30" r="3" stroke="#f4c21c" strokeWidth="2" /><path d="m16 22 12 7M16 28l11-8" stroke="#f2f4f6" strokeWidth="2.500" /></Icon>
        </button>
        <div className="flex">
          <button aria-label="Browser window" className={`${running} w-[55px]`}><Browser /></button>
          <div className="h-[39px] w-[5px] rounded-r border border-l-0 border-[#5d7084] bg-[#c5d9ee]" />
        </div>
        <button aria-label="On-screen keyboard" className={`${running} w-[60px]`}>
          <Icon w={36} h={34}><path d="m10 2 22 3-4 21-18-5z" fill="#1021c4" stroke="#c3c8cf" strokeWidth="2" /><path d="m16 24 6 1 5 5q-7 3-14 0z" fill="#c6cbd2" /><path d="M1 9h22v9H1z" fill="#3a9be0" stroke="#e9f3fb" /><path d="M3 12h18M3 15h18" stroke="#fff" strokeWidth="1.500" strokeDasharray="2 1" /></Icon>
        </button>
        <button aria-label="3ds Max" className={`${running} w-[60px]`}>
          <Icon w={28} h={34}><rect x="1" y="1" width="26" height="32" rx="2" fill="#20292f" stroke="#6b747c" /><path d="M21 9h-7C8 9 6 11 6 16c0 6 2 8 8 8s8-2 8-6-3-5-8-5c-3 0-4 1-4 3s3 2 5 3c1 0 3-1 2-3" stroke="#fff" strokeWidth="2" strokeLinecap="round" /></Icon>
        </button>
      </div>
      <div className="flex h-full flex-1 items-center justify-end">
        <div className="flex h-full items-center bg-linear-to-r from-[#b4d1ed] via-[#8ea4bd] via-12% to-[#8198b1] pl-[56px] text-white">
          <span className="w-6 pb-1 text-[12px]">EN</span>
          <button aria-label="Show hidden icons" className="flex w-6 justify-center pt-1"><Icon w={10} h={5}><path d="M5 0l5 5H0z" fill="#fff" stroke="#4b5b6d" strokeWidth=".5" /></Icon></button>
          <button aria-label="Sync" className="flex w-6 justify-center"><Icon w={18} h={18}><path d="M2 10 8 3h6l2 3-6 7H3z" fill="#f3f3f3" stroke="#5a5a5a" /><path d="M4 9l6-5" stroke="#777" /><circle cx="12" cy="12" r="4" fill="#aaa" stroke="#eee" /><path d="M10 12h4" stroke="#fff" strokeWidth="1.500" /></Icon></button>
          <button aria-label="Network" className="flex w-6 justify-center"><Icon w={18} h={16}><path d="M1 12h2v3H1zM4.500 10h2v5h-2zM8 8h2v7H8z" fill="#fff" stroke="#556" strokeWidth=".5" /><path d="M11.500 5h2v10h-2zM15 2h2v13h-2z" fill="#a9b7c6" stroke="#dde" strokeWidth=".5" /></Icon></button>
          <button aria-label="Power" className="flex w-6 justify-center"><Icon w={18} h={18}><path d="M2 3h6v12H2z" fill="#ddd" stroke="#222" /><path d="M9 6h8v3l-2 3h-4L9 9zM11 2v4M15 2v4M13 12v5" fill="#fff" stroke="#222" /><path d="m1 9 8 8M9 9l-8 8" stroke="#e01414" strokeWidth="2.500" /></Icon></button>
          <div className="w-20 pt-px text-center text-[12px] leading-[17px]"><div>23:19</div><div>06.02.2020</div></div>
          <button aria-label="Show desktop" className="h-full w-[14px] border border-[#52657a] bg-linear-to-b from-[#b9c8d8] to-[#8aa0b8]" />
        </div>
      </div>
    </footer>
  );
}

export default function App() {
  return (
    <div className="flex min-h-screen w-full flex-col overflow-hidden bg-[#444] font-[Roboto,sans-serif]">
      <Header />
      <Toolbar />
      <Ribbon />
      <main className="flex flex-1 border-t border-[#2a2a2a]">
        <SideStrip />
        <div className="flex min-w-0 flex-1 flex-col">
          <Viewport />
          <Timeline />
        </div>
        <CommandPanel />
      </main>
      <StatusBar />
      <Taskbar />
    </div>
  );
}
